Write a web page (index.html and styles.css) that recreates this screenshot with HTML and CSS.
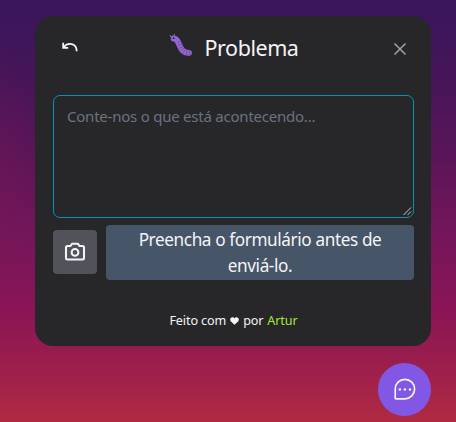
FILE: index.html
```
<!DOCTYPE html>
<html lang="pt-BR">
<head>
<meta charset="utf-8">
<title>Problema</title>
<link rel="stylesheet" href="styles.css">
</head>
<body>
<main class="widget">
  <section class="panel">
    <header class="header">
      <button class="icon-button back" aria-label="Voltar">
        <svg width="16" height="11" viewBox="0 0 16 11" fill="none" stroke="currentColor" stroke-width="1.800"><path d="M1.200 .8v5h5M1.500 5.500C6-.5 14.700 1.500 14.700 9.300"/></svg>
      </button>
      <h1 class="title">
        <svg class="bug" width="24" height="24" viewBox="0 0 24 24">
          <path d="M4.500 4.500C12 4.500 8.500 19 20 18.800" fill="none" stroke="#9266cc" stroke-width="5.800" stroke-linecap="round"/>
          <path d="M8.500 8.500l3.500-1.500M9 11.500l4-1.500M10 14.500l4-2M11.500 17l3.800-3M14 20l2-4.500M17.500 21.500l.5-5M21 21.500l-.7-5" fill="none" stroke="#7148a8" stroke-width=".8"/>
          <path d="M2 3L1 1M5 2l.5-2" stroke="#9266cc" stroke-width="1"/>
          <circle cx="4.700" cy="4.200" r=".9" fill="#29213b"/><circle cx="1.800" cy="4" r=".6" fill="#29213b"/>
        </svg>
        <span class="title-text">Problema</span>
      </h1>
      <button class="icon-button close" aria-label="Fechar">
        <svg width="14" height="14" viewBox="0 0 14 14" fill="none" stroke="currentColor" stroke-width="1.500"><path d="M1.500 1.500l11 11M12.500 1.500l-11 11"/></svg>
      </button>
    </header>
    <form class="form">
      <div class="field">
        <textarea class="comment" placeholder="Conte-nos o que está acontecendo..."></textarea>
        <svg class="grip" width="9" height="9" viewBox="0 0 9 9" stroke="#c8c8c8" fill="none"><path d="M.5 8L8 .5M4.500 8L8 4.500"/></svg>
      </div>
      <div class="actions">
        <button class="camera" type="button" aria-label="Capturar tela">
          <svg width="24" height="24" viewBox="0 0 256 256" fill="none" stroke="currentColor" stroke-width="22" stroke-linejoin="round"><path d="M208 208H48a16 16 0 0 1-16-16V80a16 16 0 0 1 16-16h32l16-24h64l16 24h32a16 16 0 0 1 16 16v112a16 16 0 0 1-16 16Z"/><circle cx="128" cy="132" r="36"/></svg>
        </button>
        <button class="submit" type="button"><span>Preencha o formulário antes de</span><span class="second">enviá-lo.</span></button>
      </div>
    </form>
    <footer class="footer">
      <span class="made">Feito com</span>
      <svg class="heart" width="9" height="8" viewBox="0 0 9 8"><path d="M4.500 7.800L.9 4.400C-.8 2.500.7.200 2.400.2c1 0 1.700.5 2.100 1.200C4.900.7 5.600.2 6.600.2c1.700 0 3.200 2.300 1.500 4.200z" fill="currentColor"/></svg>
      <span class="by">por</span>
      <a class="author">Artur</a>
    </footer>
  </section>
  <button class="trigger" aria-label="Feedback">
    <svg width="27" height="27" viewBox="0 0 256 256" fill="none" stroke="currentColor" stroke-width="16"><path d="M132 216H47.700a7.600 7.600 0 0 1-7.700-7.700V124a92 92 0 0 1 92-92 92 92 0 0 1 92 92 92 92 0 0 1-92 92Z"/><g fill="currentColor" stroke="none"><circle cx="132" cy="128" r="12"/><circle cx="84" cy="128" r="12"/><circle cx="180" cy="128" r="12"/></g></svg>
  </button>
</main>
</body>
</html>
```
FILE: styles.css
```
* { box-sizing: border-box; }
body {
  margin: 0;
  height: 422px;
  overflow: hidden;
  font-family: "Segoe UI", "Noto Sans", sans-serif;
  color: #f4f4f5;
  background:
    radial-gradient(ellipse 36px 130px at 0 180px, #7a184f55, #7a184f00),
    linear-gradient(#38165c 0, #471559 80px, #5c1559 160px, #74165a 235px, #8a1556 310px, #9b1e4c 365px, #b02b42 422px);
}
button { border: 0; padding: 0; font: inherit; color: inherit; display: flex; align-items: center; justify-content: center; }
svg { display: block; flex: none; }
.widget { display: flex; flex-direction: column; align-items: flex-end; gap: 17px; padding: 16px 25px 0 35px; }
.panel { width: 396px; height: 330px; border-radius: 18px; background: #27272a; padding: 17px 17px 0 18px; display: flex; flex-direction: column; }
.header { height: 30px; display: flex; align-items: center; justify-content: space-between; }
.icon-button { width: 34px; height: 30px; background: none; }
.back { padding-bottom: 1px; }
.close { width: 28px; padding-top: 2px; color: #a1a1aa; }
.title { display: flex; align-items: center; gap: 12px; margin: 0 6px 0 0; font-weight: 400; font-size: 21.500px; line-height: 30px; }
.bug { margin-bottom: 5px; }
.title-text { letter-spacing: -.45px; }
.form { margin-top: 32px; }
.field { position: relative; height: 123px; }
.comment { display: block; width: 100%; height: 100%; resize: none; border: 1px solid #0891b2; border-radius: 7px; background: transparent; padding: 8px 13px; font: 15px/24px "Segoe UI", "Noto Sans", sans-serif; letter-spacing: -.23px; outline: 0; }
.comment::placeholder { color: #6b7280; opacity: 1; }
.grip { position: absolute; right: 2px; bottom: 2px; }
.actions { margin-top: 7px; display: flex; align-items: center; gap: 9px; }
.camera { width: 44px; height: 44px; margin-bottom: 1px; border-radius: 4px; background: #52525b; flex: none; }
.submit { height: 55px; flex: 1; flex-direction: column; border-radius: 4px; background: #475569; font-size: 17.200px; letter-spacing: -.4px; line-height: 26px; }
.footer { display: flex; align-items: center; justify-content: center; gap: 4px; margin-top: 32px; height: 18px; font-size: 12.600px; letter-spacing: -.12px; line-height: 18px; }
.author { color: #a3e635; }
.trigger { width: 53px; height: 53px; border-radius: 50%; background: #8257e5; }
```
